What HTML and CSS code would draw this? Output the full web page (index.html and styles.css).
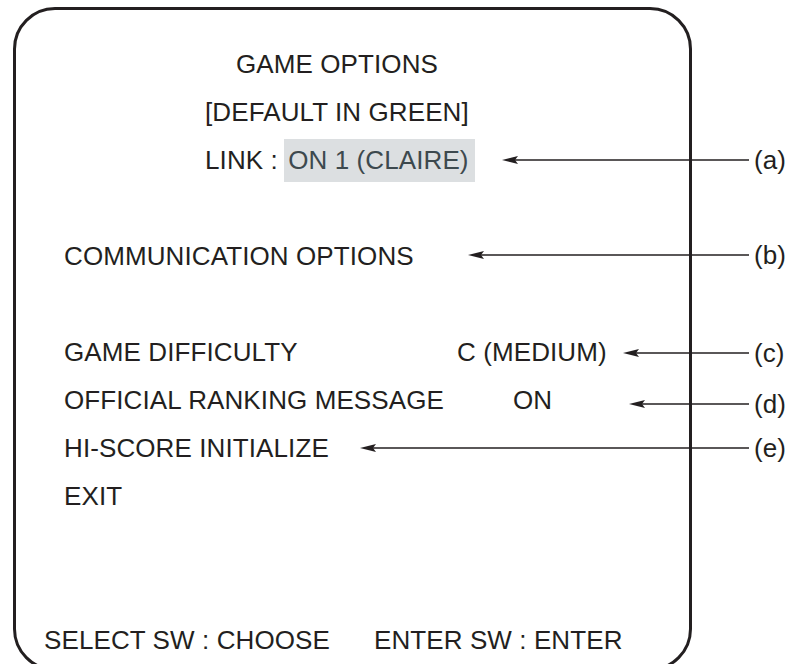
FILE: index.html
```html
<!DOCTYPE html>
<html>
<head>
<meta charset="utf-8">
<link rel="stylesheet" href="styles.css">
</head>
<body>
<div class="screen">
  <div class="menu">
    <div class="row title">GAME OPTIONS</div>
    <div class="row sub">[DEFAULT IN GREEN]</div>
    <div class="row sub">LINK : <span class="hl">ON 1 (CLAIRE)</span></div>
    <div class="row blank"></div>
    <div class="row item">COMMUNICATION OPTIONS</div>
    <div class="row blank"></div>
    <div class="row item pair"><span class="name">GAME DIFFICULTY</span><span class="val">C (MEDIUM)</span></div>
    <div class="row item pair"><span class="name">OFFICIAL RANKING MESSAGE</span><span class="val val-on">ON</span></div>
    <div class="row item">HI-SCORE INITIALIZE</div>
    <div class="row item">EXIT</div>
    <div class="row blank"></div>
    <div class="row blank"></div>
    <div class="row foot"><span>SELECT SW : CHOOSE</span><span>ENTER SW : ENTER</span></div>
  </div>
</div>
<svg class="callouts" width="794" height="664" viewBox="0 0 794 664">
  <g stroke="#231f20" stroke-width="1.4" fill="none">
    <line x1="512" y1="160" x2="749" y2="160"/>
    <line x1="478" y1="255" x2="749" y2="255"/>
    <line x1="633" y1="353" x2="749" y2="353"/>
    <line x1="639" y1="404" x2="749" y2="404"/>
    <line x1="370" y1="448" x2="749" y2="448"/>
  </g>
  <g fill="#231f20">
    <polygon points="502,160 518,156 515,160 518,164"/>
    <polygon points="468,255 484,251 481,255 484,259"/>
    <polygon points="623,353 639,349 636,353 639,357"/>
    <polygon points="629,404 645,400 642,404 645,408"/>
    <polygon points="360,448 376,444 373,448 376,452"/>
  </g>
</svg>
<div class="label label-a">(a)</div>
<div class="label label-b">(b)</div>
<div class="label label-c">(c)</div>
<div class="label label-d">(d)</div>
<div class="label label-e">(e)</div>
</body>
</html>
```
FILE: styles.css
```css
html, body {
  margin: 0;
  padding: 0;
  background: #ffffff;
}
body {
  width: 794px;
  height: 664px;
  overflow: hidden;
  position: relative;
  font-family: "Liberation Sans", Arial, Helvetica, sans-serif;
  font-size: 26px;
  letter-spacing: 0.1px;
  color: #231f20;
}
.screen {
  box-sizing: border-box;
  margin: 7px 0 0 13px;
  width: 679px;
  height: 664px;
  border: 3px solid #231f20;
  border-radius: 42px;
  padding-top: 30px;
}
.menu {
  display: flex;
  flex-direction: column;
}
.row {
  height: 48px;
  line-height: 48px;
  white-space: nowrap;
}
.title {
  padding-left: 220px;
}
.sub {
  padding-left: 189px;
}
.hl {
  display: inline-block;
  height: 43px;
  line-height: 43px;
  margin-left: -1px;
  padding: 0 6px 0 4px;
  background: #dcdfe1;
  color: #3d494e;
}
.item {
  padding-left: 48px;
}
.pair {
  display: grid;
  grid-template-columns: 393px auto;
}
.val-on {
  padding-left: 56px;
}
.foot {
  padding-left: 28px;
  display: flex;
  gap: 44px;
}
.callouts {
  position: absolute;
  left: 0;
  top: 0;
  pointer-events: none;
}
.label {
  position: absolute;
  left: 754px;
  line-height: 48px;
  white-space: nowrap;
}
.label-a { top: 136px; }
.label-b { top: 231px; }
.label-c { top: 329px; }
.label-d { top: 380px; }
.label-e { top: 424px; }
```
